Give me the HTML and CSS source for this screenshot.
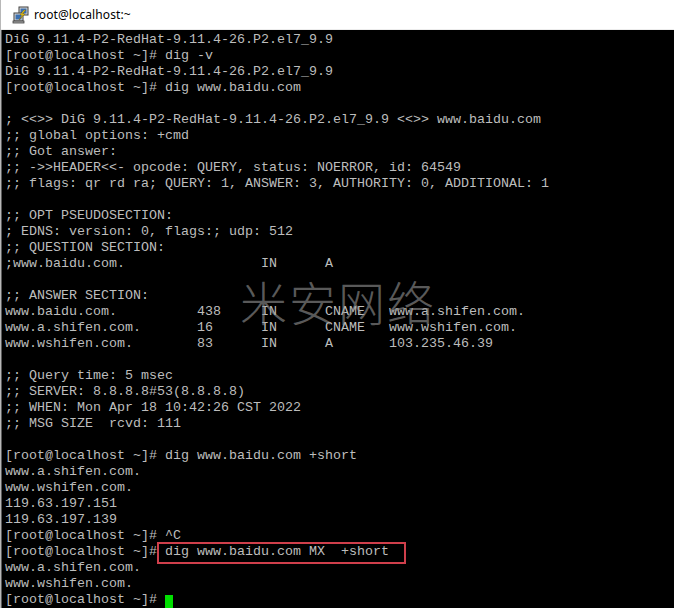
FILE: index.html
```html
<!DOCTYPE html>
<html lang="en">
<head>
    <meta charset="UTF-8">
    <meta name="viewport" content="width=device-width, initial-scale=1.0">
    <title>root@localhost:~</title>
    <link rel="stylesheet" href="styles.css">
</head>
<body>
    <div class="window">
        <header class="titlebar">
            <svg class="app-icon" width="18" height="18" viewBox="0 0 18 18">
                <!-- back computer -->
                <rect x="7" y="1" width="9" height="8" fill="#d8d8d8" stroke="#404040" stroke-width="1"/>
                <rect x="8.5" y="2.5" width="6" height="5" fill="#3a6fb0"/>
                <!-- front computer -->
                <rect x="2" y="7" width="9" height="8" fill="#d8d8d8" stroke="#404040" stroke-width="1"/>
                <rect x="3.5" y="8.5" width="6" height="5" fill="#3a6fb0"/>
                <rect x="1" y="15" width="11" height="2" fill="#a8a8a8" stroke="#404040" stroke-width="0.8"/>
                <!-- bolt -->
                <path d="M12 4 L8 9 L10.5 9 L7 14 L13 8 L10.5 8 L13.5 4 Z" fill="#f3d21c" stroke="#806000" stroke-width="0.5"/>
            </svg>
            <span class="title">root@localhost:~</span>
        </header>

        <main class="terminal">
<pre class="screen">DiG 9.11.4-P2-RedHat-9.11.4-26.P2.el7_9.9
[root@localhost ~]# dig -v
DiG 9.11.4-P2-RedHat-9.11.4-26.P2.el7_9.9
[root@localhost ~]# dig www.baidu.com

; &lt;&lt;&gt;&gt; DiG 9.11.4-P2-RedHat-9.11.4-26.P2.el7_9.9 &lt;&lt;&gt;&gt; www.baidu.com
;; global options: +cmd
;; Got answer:
;; -&gt;&gt;HEADER&lt;&lt;- opcode: QUERY, status: NOERROR, id: 64549
;; flags: qr rd ra; QUERY: 1, ANSWER: 3, AUTHORITY: 0, ADDITIONAL: 1

;; OPT PSEUDOSECTION:
; EDNS: version: 0, flags:; udp: 512
;; QUESTION SECTION:
;www.baidu.com.                 IN      A

;; ANSWER SECTION:
www.baidu.com.          438     IN      CNAME   www.a.shifen.com.
www.a.shifen.com.       16      IN      CNAME   www.wshifen.com.
www.wshifen.com.        83      IN      A       103.235.46.39

;; Query time: 5 msec
;; SERVER: 8.8.8.8#53(8.8.8.8)
;; WHEN: Mon Apr 18 10:42:26 CST 2022
;; MSG SIZE  rcvd: 111

[root@localhost ~]# dig www.baidu.com +short
www.a.shifen.com.
www.wshifen.com.
119.63.197.151
119.63.197.139
[root@localhost ~]# ^C
[root@localhost ~]# <span class="highlight">dig www.baidu.com MX  +short</span>
www.a.shifen.com.
www.wshifen.com.
[root@localhost ~]# <span class="cursor"> </span></pre>
            <div class="watermark">米安网络</div>
        </main>
    </div>
</body>
</html>
```

FILE: styles.css
```css
* {
    margin: 0;
    padding: 0;
    box-sizing: border-box;
}

html, body {
    height: 100%;
}

body {
    background: #000;
    overflow: hidden;
}

.window {
    height: 100%;
    display: flex;
    flex-direction: column;
    border-left: 1px solid #b8b8b8;
}

.titlebar {
    height: 30px;
    flex: none;
    display: flex;
    align-items: center;
    gap: 4px;
    padding-left: 11px;
    background: #fff;
    border-bottom: 1px solid #ececec;
}

.app-icon {
    display: block;
    margin-top: 1px;
}

.title {
    font-family: "Noto Sans", "DejaVu Sans", sans-serif;
    font-size: 12px;
    color: #000;
    letter-spacing: 0.1px;
}

.terminal {
    flex: 1;
    position: relative;
    background: #000;
    border-left: 1px solid #5a5a5a;
    padding: 2px 0 0 3px;
}

.screen {
    font-family: "Liberation Mono", "Courier New", monospace;
    font-size: 13.333px;
    line-height: 16px;
    color: #bdbdbd;
    white-space: pre;
}

.highlight {
    position: relative;
}

.highlight::after {
    content: "";
    position: absolute;
    left: -8px;
    right: -17px;
    top: -2px;
    bottom: -5px;
    border: 2px solid #cf3f4b;
}

.cursor {
    display: inline-block;
    width: 8px;
    height: 15px;
    vertical-align: -3px;
    background: #00e000;
}

.watermark {
    position: absolute;
    left: 238px;
    top: 236px;
    font-family: "Noto Sans CJK SC", sans-serif;
    font-weight: 300;
    font-size: 47px;
    letter-spacing: 2px;
    color: rgba(150, 150, 150, 0.6);
    pointer-events: none;
}
```
